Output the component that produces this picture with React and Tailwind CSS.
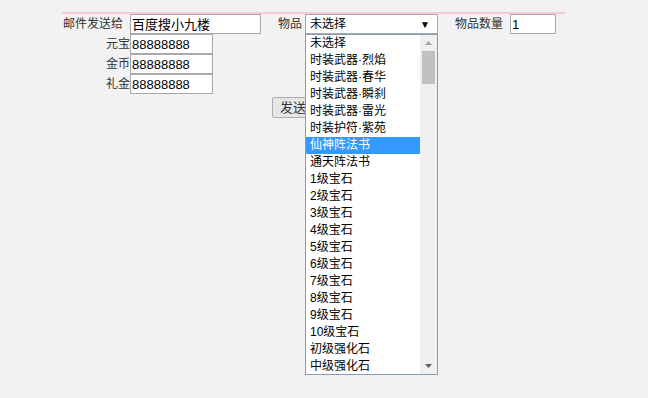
import React from 'react';

const items = [
  '未选择',
  '时装武器·烈焰',
  '时装武器·春华',
  '时装武器·瞬刹',
  '时装武器·雷光',
  '时装护符·紫苑',
  '仙神阵法书',
  '通天阵法书',
  '1级宝石',
  '2级宝石',
  '3级宝石',
  '4级宝石',
  '5级宝石',
  '6级宝石',
  '7级宝石',
  '8级宝石',
  '9级宝石',
  '10级宝石',
  '初级强化石',
  '中级强化石',
];

const font = "font-['Liberation_Sans','Noto_Sans_CJK_SC',sans-serif]";

function Field({ value, width }) {
  return (
    <div className={`${width} h-[20px] bg-white border border-[#a9a9a9] px-[1px] flex items-center text-[13px] text-black leading-none`}>
      {value}
    </div>
  );
}

export default function App() {
  return (
    <div className={`w-[648px] h-[398px] bg-[#f2f2f2] overflow-hidden text-[12px] text-[#333] ${font}`}>
      <div className="ml-[62px] mt-[12px] w-[503px] border-t-2 border-[#f3cdd1]">
        {/* first row: receiver, item, amount */}
        <div className="flex items-center h-[20px]">
          <span className="w-[68px] text-right pr-[7px]">邮件发送给</span>
          <Field value="百度搜小九楼" width="w-[131px]" />
          <span className="ml-[17px] w-[27px]">物品</span>
          <div className="relative">
            <div className="w-[133px] h-[20px] bg-white border border-[#a9a9a9] flex items-center justify-between pl-[4px] pr-[7px] text-black">
              <span>未选择</span>
              <span className="text-[10px]">▼</span>
            </div>
            {/* open dropdown list */}
            <div className="absolute left-0 top-[20px] w-[133px] h-[341px] bg-white border border-[#7f9db9] flex z-10">
              <div className="flex-1 flex flex-col">
                {items.map((it, i) => (
                  <div
                    key={it}
                    className={`h-[17px] leading-[17px] pl-[4px] whitespace-nowrap ${i === 6 ? 'bg-[#3399ff] text-white' : 'text-black'}`}
                  >
                    {it}
                  </div>
                ))}
              </div>
              <div className="w-[17px] bg-[#f0f0f0] flex flex-col items-center">
                <div className="h-[16px] flex items-center justify-center">
                  <svg width="7" height="4" viewBox="0 0 7 4"><path d="M0 4 L3.5 0 L7 4 Z" fill="#a3a3a3" /></svg>
                </div>
                <div className="w-[13px] h-[33px] bg-[#c1c1c1]" />
                <div className="flex-1" />
                <div className="h-[16px] flex items-center justify-center">
                  <svg width="7" height="4" viewBox="0 0 7 4"><path d="M0 0 L7 0 L3.5 4 Z" fill="#606060" /></svg>
                </div>
              </div>
            </div>
          </div>
          <span className="ml-[17px] w-[55px]">物品数量</span>
          <Field value="1" width="w-[46px]" />
        </div>

        {/* money rows */}
        {[
          ['元宝', '88888888'],
          ['金币', '88888888'],
          ['礼金', '88888888'],
        ].map(([label, val]) => (
          <div key={label} className="flex items-center h-[20px]">
            <span className="w-[68px] text-right">{label}</span>
            <Field value={val} width="w-[83px]" />
          </div>
        ))}

        <div className="mt-[3px] pl-[210px]">
          <button className="h-[21px] w-[48px] text-left pl-[7px] bg-[#e6e6e6] border border-[#adadad] rounded-[2px] text-[13px] text-[#333] leading-none">
            发送
          </button>
        </div>
      </div>
    </div>
  );
}
